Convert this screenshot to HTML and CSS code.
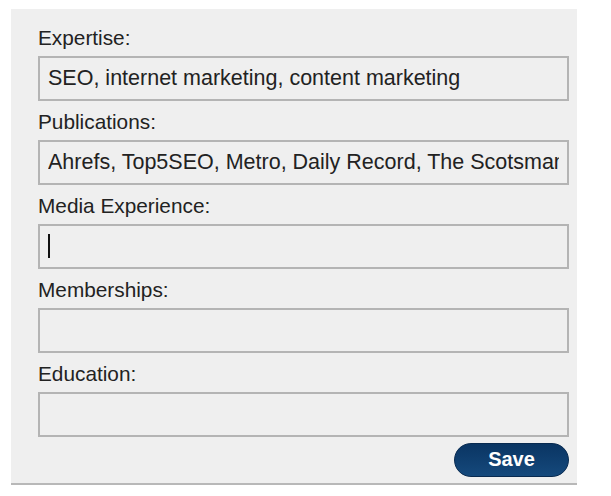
FILE: index.html
```html
<!DOCTYPE html>
<html lang="en">
<head>
    <meta charset="UTF-8">
    <title>Profile Details</title>
    <link rel="stylesheet" href="styles.css">
</head>
<body>
    <form class="panel">
        <label class="field-label" for="expertise">Expertise:</label>
        <input class="field" type="text" id="expertise" value="SEO, internet marketing, content marketing">

        <label class="field-label" for="publications">Publications:</label>
        <input class="field" type="text" id="publications" value="Ahrefs, Top5SEO, Metro, Daily Record, The Scotsman, The Herald">

        <label class="field-label" for="media">Media Experience:</label>
        <div class="field-wrap">
            <input class="field" type="text" id="media" value="">
            <span class="caret"></span>
        </div>

        <label class="field-label" for="memberships">Memberships:</label>
        <input class="field" type="text" id="memberships" value="">

        <label class="field-label" for="education">Education:</label>
        <input class="field" type="text" id="education" value="">

        <div class="actions">
            <button type="button" class="save-button">Save</button>
        </div>
    </form>
</body>
</html>
```

FILE: styles.css
```css
body {
    margin: 0;
    padding: 9px 0 0 11px;
    background-color: #fff;
    font-family: 'Liberation Sans', Arial, sans-serif;
    color: #222;
}

.panel {
    width: 531px;
    padding: 18px 8px 6px 27px;
    background-color: #efefef;
    border-bottom: 2px solid #b8b8b8;
    display: flex;
    flex-direction: column;
}

.field-label {
    font-size: 20.8px;
    line-height: 22px;
    margin-bottom: 7px;
}

.field {
    box-sizing: border-box;
    width: 531px;
    height: 45px;
    margin: 0 0 10px 0;
    padding: 0 8px;
    border: 2px solid #b4b4b4;
    background-color: #efefef;
    font-family: 'Liberation Sans', Arial, sans-serif;
    font-size: 21.5px;
    color: #222;
    outline: none;
}

.field-wrap {
    position: relative;
}

.caret {
    position: absolute;
    left: 10px;
    top: 10px;
    width: 2px;
    height: 24px;
    background-color: #111;
}

.actions {
    display: flex;
    justify-content: flex-end;
    margin-top: -4px;
}

.save-button {
    width: 115px;
    height: 34px;
    border: 1px solid #082a50;
    border-radius: 17px;
    background: linear-gradient(#0a3563, #15497c);
    color: #fff;
    font-family: 'Liberation Sans', Arial, sans-serif;
    font-weight: bold;
    font-size: 20px;
    padding: 0 0 2px 0;
    cursor: pointer;
}
```
